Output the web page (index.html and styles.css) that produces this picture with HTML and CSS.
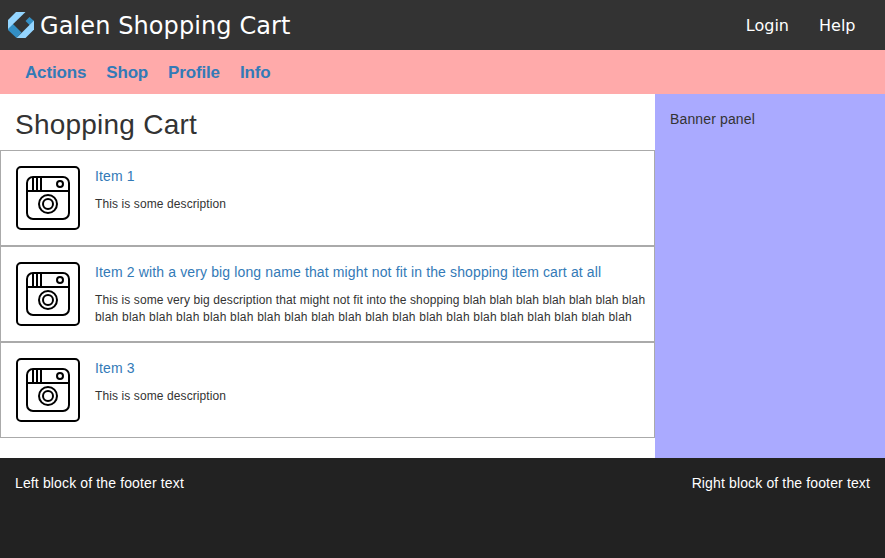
FILE: index.html
```html
<!DOCTYPE html>
<html lang="en">
<head>
<meta charset="utf-8">
<title>Galen Shopping Cart</title>
<link rel="stylesheet" href="styles.css">
</head>
<body>
<svg class="sprite" aria-hidden="true">
  <symbol id="camera" viewBox="0 0 64 64">
    <g fill="none" stroke="#000" stroke-width="2">
      <rect x="1" y="1" width="62" height="62" rx="4"/>
      <rect x="11" y="11" width="42" height="42" rx="6"/>
      <path d="M11 25H53M17 11V25M21 11V25M25 11V25"/>
      <circle cx="44" cy="18" r="3"/>
      <circle cx="32" cy="38" r="9"/>
      <circle cx="32" cy="38" r="5"/>
    </g>
  </symbol>
</svg>
<header class="header">
  <svg class="logo" viewBox="0 0 26 26">
    <path fill="#338fc5" d="M0 8L5 12L13.5 20.5L8.5 26L0 18Z"/>
    <path fill="#94d5ff" d="M8 0H17.5L0 17V8Z"/>
    <path fill="#338fc5" d="M17.5 9L21.5 5L26 9L22 13.5Z"/>
    <path fill="#94d5ff" d="M8.5 26L26 8.5V17.5L17.5 26Z"/>
  </svg>
  <h1 class="title">Galen Shopping Cart</h1>
  <nav class="links"><a>Login</a><a>Help</a></nav>
</header>
<nav class="menu"><a>Actions</a><a>Shop</a><a>Profile</a><a>Info</a></nav>
<div class="middle">
  <main class="content">
    <h2 class="heading">Shopping Cart</h2>
    <article class="item"><svg class="icon"><use href="#camera"/></svg>
      <div class="text"><a class="name">Item 1</a><p class="description">This is some description</p></div></article>
    <article class="item"><svg class="icon"><use href="#camera"/></svg>
      <div class="text"><a class="name">Item 2 with a very big long name that might not fit in the shopping item cart at all</a><p class="description">This is some very big description that might not fit into the shopping blah blah blah blah blah blah blah <span class="wide">blah blah blah blah blah blah blah blah blah blah blah blah blah blah blah blah blah blah blah blah</span></p></div></article>
    <article class="item"><svg class="icon"><use href="#camera"/></svg>
      <div class="text"><a class="name">Item 3</a><p class="description">This is some description</p></div></article>
  </main>
  <aside class="banner">Banner panel</aside>
</div>
<footer class="footer"><span>Left block of the footer text</span><span>Right block of the footer text</span></footer>
</body>
</html>
```

FILE: styles.css
```css
* { box-sizing: border-box; }
body { margin: 0; font: 14px/20px "Nimbus Sans", "Liberation Sans", Arial, sans-serif; letter-spacing: .135px; color: #333; background: #fff; }
.sprite { display: none; }
.header { display: flex; align-items: center; height: 50px; padding: 0 29.5px 0 8px; background: #333; color: #fff; font-family: "DejaVu Sans", sans-serif; letter-spacing: 0; }
.logo { width: 26px; height: 26px; margin-right: 6px; }
.title { margin: 0; padding-top: 2px; font-size: 24px; font-weight: 400; line-height: 50px; letter-spacing: .1px; }
.links { display: flex; gap: 30px; margin-left: auto; padding-top: 2px; font-size: 16px; }
.menu { display: flex; gap: 20px; height: 44px; padding: 1px 25px 0; background: #faa; color: #337ab7; font-size: 17px; font-weight: 700; line-height: 44px; letter-spacing: -.16px; }
.middle { display: flex; height: 364px; }
.content { width: 655px; }
.heading { height: 56px; margin: 0; padding: 15px 15px 0; font-size: 28px; font-weight: 400; line-height: 31px; letter-spacing: .23px; }
.item { display: flex; gap: 15px; height: 96px; padding: 15px 0 0 15px; border: 1px solid #aaa; }
.icon { flex: none; width: 64px; height: 64px; }
.text { flex: 1; min-width: 0; }
.name { display: block; color: #337ab7; }
.description { margin: 10px 0 0; font-size: 12px; line-height: 17px; letter-spacing: .1px; }
.wide { letter-spacing: .2px; }
.banner { flex: 1; padding: 15px; background: #aaf; }
.footer { display: flex; justify-content: space-between; height: 100px; padding: 15px; background: #222; color: #fff; }
```
